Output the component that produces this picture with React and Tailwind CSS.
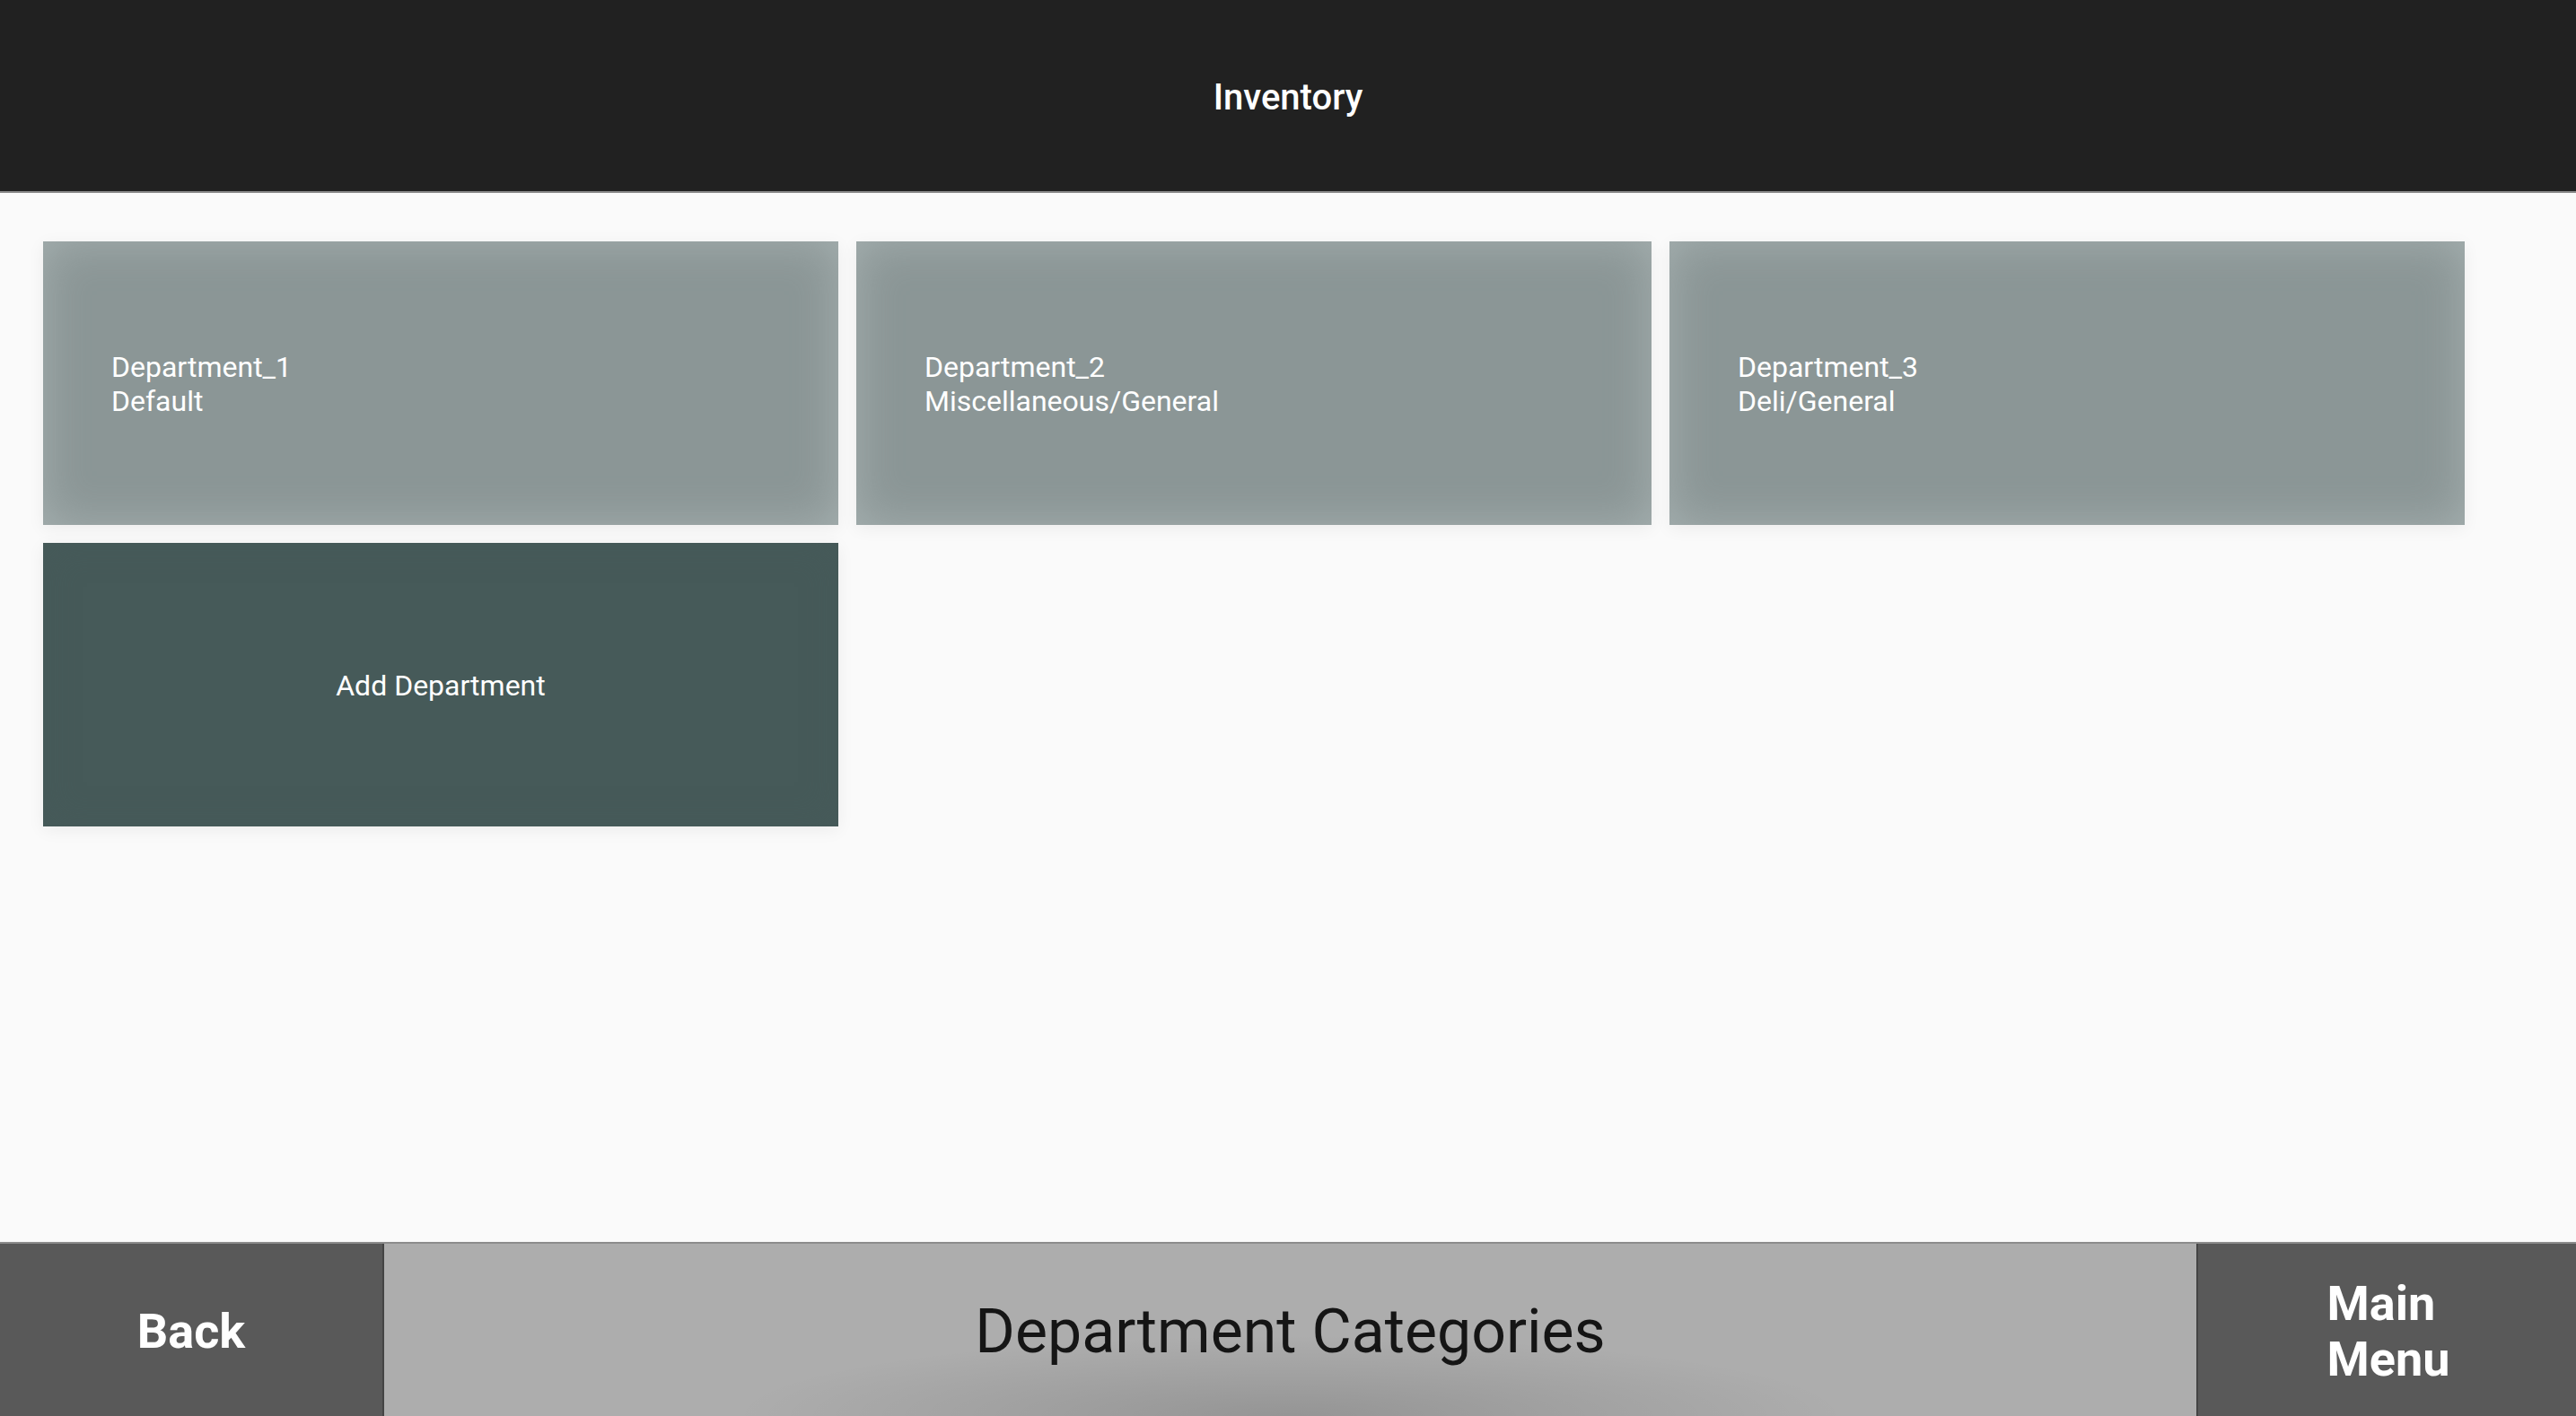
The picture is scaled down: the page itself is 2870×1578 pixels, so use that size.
import React from 'react';

const departments = [
  { name: 'Department_1', category: 'Default' },
  { name: 'Department_2', category: 'Miscellaneous/General' },
  { name: 'Department_3', category: 'Deli/General' },
];

export default function App() {
  return (
    <div className="w-[2870px] h-[1578px] flex flex-col bg-[#fafafa] overflow-hidden font-['Roboto',sans-serif]">
      <header className="h-[215px] shrink-0 bg-[#212121] border-b-2 border-[#8a8a8a] flex items-center justify-center pt-[4px]">
        <h1 className="text-[40px] font-medium text-white">Inventory</h1>
      </header>

      <main className="flex-1 pl-[48px] pt-[54px]">
        <div className="grid grid-cols-[repeat(3,886px)] auto-rows-[316px] gap-x-[20px] gap-y-[20px]">
          {departments.map((d) => (
            <button
              key={d.name}
              className="bg-[#8b9696] shadow-[inset_0_0_50px_rgba(205,216,216,0.4),0_4px_18px_rgba(0,0,0,0.06)] flex flex-col justify-center items-start pl-[76px] pt-[1px] text-left text-white text-[32px] leading-[38px]"
            >
              <span>{d.name}</span>
              <span>{d.category}</span>
            </button>
          ))}
          <button className="bg-[#465a59] shadow-[inset_0_0_40px_rgba(70,90,89,0.4),0_4px_18px_rgba(0,0,0,0.06)] flex items-center justify-center pt-[2px] text-white text-[32px]">
            Add Department
          </button>
        </div>
      </main>

      <footer className="h-[194px] shrink-0 flex border-t-2 border-[#8c8c8c]">
        <button className="w-[428px] bg-[#595959] border-r-2 border-[#444] flex items-center justify-center pt-[3px] text-white text-[54px] font-bold">
          Back
        </button>
        <div className="flex-1 bg-[#adadad] bg-[radial-gradient(ellipse_620px_90px_at_50%_100%,rgba(0,0,0,0.14),transparent)] flex items-center justify-center pt-[3px]">
          <span className="text-[68px] text-[#151515]">Department Categories</span>
        </div>
        <button className="w-[423px] bg-[#595959] border-l-2 border-[#444] flex items-center justify-center pt-[3px] pl-[3px]">
          <span className="text-left text-white text-[54px] font-bold leading-[62px]">
            Main
            <br />
            Menu
          </span>
        </button>
      </footer>
    </div>
  );
}
